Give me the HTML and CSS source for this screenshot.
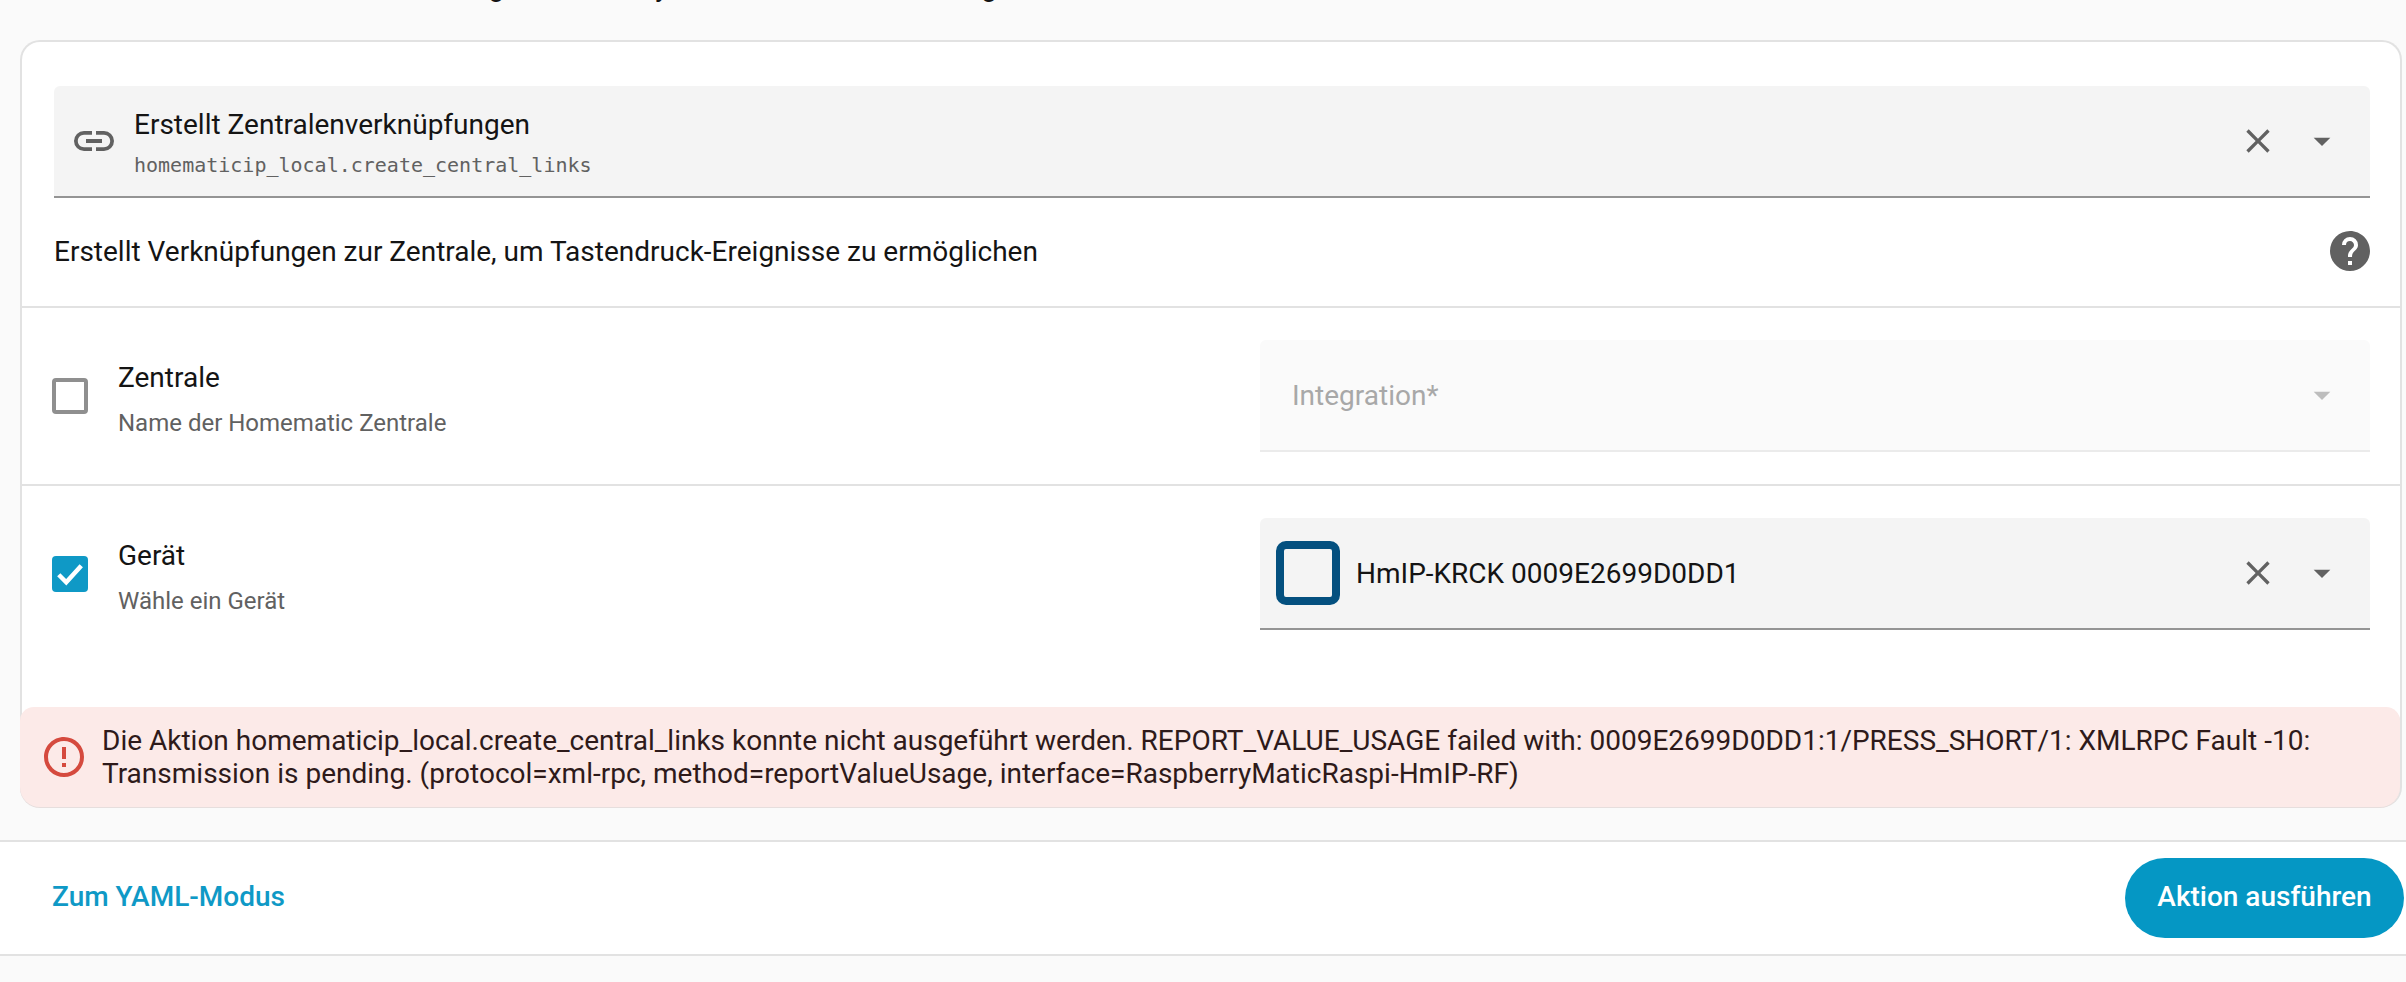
FILE: index.html
```html
<!DOCTYPE html>
<html lang="de">
<head>
  <meta charset="UTF-8" />
  <meta name="viewport" content="width=device-width, initial-scale=1.0"/>
  <title>Aktionen</title>
  <link rel="stylesheet" href="styles.css">
</head>
<body>

  <div class="intro">
    <p>Mit den Aktions-Entwicklerwerkzeug in diesem System kannst du alle verfügbaren Aktionen ausführen.</p>
  </div>

  <div class="card">
    <div class="card-body">
      <div class="field action-field">
        <svg class="icon icon-link" viewBox="0 0 24 24"><path d="M3.9,12C3.9,10.29 5.29,8.9 7,8.9H11V7H7A5,5 0 0,0 2,12A5,5 0 0,0 7,17H11V15.1H7C5.29,15.1 3.9,13.71 3.9,12M8,13H16V11H8V13M17,7H13V8.9H17C18.71,8.9 20.1,10.29 20.1,12C20.1,13.71 18.71,15.1 17,15.1H13V17H17A5,5 0 0,0 22,12A5,5 0 0,0 17,7Z"/></svg>
        <div class="action-text">
          <div class="action-name">Erstellt Zentralenverknüpfungen</div>
          <div class="action-id">homematicip_local.create_central_links</div>
        </div>
        <svg class="icon icon-close" viewBox="0 0 24 24"><path d="M19,6.41L17.59,5L12,10.59L6.41,5L5,6.41L10.59,12L5,17.59L6.41,19L12,13.41L17.59,19L19,17.59L13.41,12L19,6.41Z"/></svg>
        <svg class="icon icon-caret" viewBox="0 0 24 24"><path d="M7,10L12,15L17,10H7Z"/></svg>
      </div>

      <div class="description">
        <span>Erstellt Verknüpfungen zur Zentrale, um Tastendruck-Ereignisse zu ermöglichen</span>
        <svg class="icon icon-help" viewBox="0 0 24 24"><path d="M15.07,11.25L14.17,12.17C13.45,12.89 13,13.5 13,15H11V14.5C11,13.39 11.45,12.39 12.17,11.67L13.41,10.41C13.78,10.05 14,9.55 14,9C14,7.89 13.1,7 12,7A2,2 0 0,0 10,9H8A4,4 0 0,1 12,5A4,4 0 0,1 16,9C16,9.88 15.64,10.67 15.07,11.25M13,19H11V17H13M12,2A10,10 0 0,0 2,12C2,17.53 6.47,22 12,22C17.53,22 22,17.53 22,12C22,6.47 17.5,2 12,2Z"/></svg>
      </div>

      <div class="row">
        <div class="checkbox"></div>
        <div class="row-text">
          <div class="row-title">Zentrale</div>
          <div class="row-sub">Name der Homematic Zentrale</div>
        </div>
        <div class="field select-field disabled">
          <span class="placeholder">Integration*</span>
          <svg class="icon icon-caret" viewBox="0 0 24 24"><path d="M7,10L12,15L17,10H7Z"/></svg>
        </div>
      </div>

      <div class="row last">
        <div class="checkbox checked">
          <svg viewBox="0 0 24 24"><path d="M4.5 12.5l5 5 10-11" /></svg>
        </div>
        <div class="row-text">
          <div class="row-title">Gerät</div>
          <div class="row-sub">Wähle ein Gerät</div>
        </div>
        <div class="field select-field">
          <div class="device-logo"></div>
          <span class="device-name">HmIP-KRCK 0009E2699D0DD1</span>
          <svg class="icon icon-close" viewBox="0 0 24 24"><path d="M19,6.41L17.59,5L12,10.59L6.41,5L5,6.41L10.59,12L5,17.59L6.41,19L12,13.41L17.59,19L19,17.59L13.41,12L19,6.41Z"/></svg>
          <svg class="icon icon-caret" viewBox="0 0 24 24"><path d="M7,10L12,15L17,10H7Z"/></svg>
        </div>
      </div>
    </div>

    <div class="error">
      <svg class="icon icon-alert" viewBox="0 0 24 24"><path d="M11,15H13V17H11V15M11,7H13V13H11V7M12,2C6.47,2 2,6.5 2,12A10,10 0 0,0 12,22A10,10 0 0,0 22,12A10,10 0 0,0 12,2M12,20A8,8 0 0,1 4,12A8,8 0 0,1 12,4A8,8 0 0,1 20,12A8,8 0 0,1 12,20Z"/></svg>
      <div class="error-text">Die Aktion homematicip_local.create_central_links konnte nicht ausgeführt werden. REPORT_VALUE_USAGE failed with: 0009E2699D0DD1:1/PRESS_SHORT/1: XMLRPC Fault -10: Transmission is pending. (protocol=xml-rpc, method=reportValueUsage, interface=RaspberryMaticRaspi-HmIP-RF)</div>
    </div>
  </div>

  <div class="footer">
    <a class="yaml-link">Zum YAML-Modus</a>
    <button class="btn-run">Aktion ausführen</button>
  </div>

</body>
</html>
```

FILE: styles.css
```css
body {
  font-family: Roboto, sans-serif;
  margin: 0;
  background: #fafafa;
  color: #141414;
  font-size: 28px;
}
.intro {
  height: 40px;
  padding-left: 54px;
  overflow: hidden;
}
.intro p {
  margin: -28px 0 0;
  line-height: 30px;
  white-space: nowrap;
}
.card {
  margin: 0 4px 0 20px;
  background: #fff;
  border: 2px solid #e2e2e2;
  border-bottom: none;
  border-radius: 20px;
}
.card-body {
  padding-top: 44px;
  height: 665px;
  box-sizing: border-box;
}
.icon {
  fill: #616161;
  flex: none;
}
.field {
  display: flex;
  align-items: center;
  background: #f4f4f4;
  border-bottom: 2px solid #949494;
  border-radius: 6px 6px 0 0;
  box-sizing: border-box;
  height: 112px;
}
.action-field {
  margin: 0 30px 0 32px;
  padding-left: 16px;
}
.icon-link {
  width: 48px;
  height: 48px;
}
.action-text {
  flex: 1;
  margin-left: 16px;
  padding-top: 6px;
}
.action-name {
  line-height: 36px;
  margin-top: -2px;
}
.action-id {
  font-family: "DejaVu Sans Mono", monospace;
  font-size: 20px;
  line-height: 30px;
  margin-top: 7px;
  color: #616161;
}
.icon-close {
  width: 40px;
  height: 40px;
}
.icon-caret {
  width: 40px;
  height: 40px;
  margin: 0 28px 0 24px;
}
.description {
  display: flex;
  align-items: center;
  justify-content: space-between;
  margin: 0 26px 0 32px;
  height: 108px;
  padding-bottom: 2px;
  box-sizing: border-box;
}
.icon-help {
  width: 48px;
  height: 48px;
}
.row {
  display: flex;
  align-items: flex-start;
  border-top: 2px solid #e2e2e2;
  height: 178px;
  box-sizing: border-box;
  padding: 32px 30px 0 30px;
}
.row.last {
  height: auto;
}
.checkbox {
  width: 36px;
  height: 36px;
  margin-top: 38px;
  box-sizing: border-box;
  border: 4px solid #8f8f8f;
  border-radius: 4px;
  flex: none;
}
.checkbox.checked {
  background: #0f99c6;
  border: none;
}
.checkbox svg {
  display: block;
  width: 36px;
  height: 36px;
  fill: none;
  stroke: #fff;
  stroke-width: 3;
}
.row-text {
  width: 1142px;
  flex: none;
  margin-left: 30px;
}
.row-title {
  line-height: 36px;
  margin-top: 20px;
}
.row-sub {
  font-size: 24px;
  line-height: 30px;
  margin-top: 12px;
  color: #616161;
}
.select-field {
  flex: 1;
  min-width: 0;
  padding-left: 16px;
}
.select-field.disabled {
  background: #fafafa;
  border-bottom-color: #ebebeb;
  padding-left: 32px;
  justify-content: space-between;
}
.select-field.disabled .icon {
  fill: #bdbdbd;
}
.placeholder {
  color: #a8a8a8;
}
.device-logo {
  width: 64px;
  height: 64px;
  box-sizing: border-box;
  border: 8px solid #04507f;
  border-radius: 10px;
  flex: none;
}
.device-name {
  flex: 1;
  margin-left: 16px;
}
.error {
  display: flex;
  align-items: center;
  height: 100px;
  margin: 0 0 0 -2px;
  background: #fceae8;
  border-radius: 14px 14px 20px 20px;
  box-shadow: 0 1px 0 #e6dedd;
  padding-left: 20px;
  box-sizing: border-box;
}
.icon-alert {
  width: 48px;
  height: 48px;
  fill: #d54a3e;
}
.error-text {
  margin-left: 14px;
  margin-right: 60px;
  line-height: 33px;
  color: #2e1a1a;
}
.footer {
  display: flex;
  align-items: center;
  justify-content: space-between;
  margin-top: 33px;
  height: 116px;
  box-sizing: border-box;
  background: #fff;
  border-top: 2px solid #e2e2e2;
  border-bottom: 2px solid #e2e2e2;
  padding: 0 2px 0 52px;
}
.yaml-link {
  color: #0f99c6;
  font-weight: 500;
  margin-bottom: 4px;
}
.btn-run {
  background-color: #0597c4;
  color: #fff;
  border: none;
  font-family: inherit;
  font-size: inherit;
  font-weight: 500;
  height: 80px;
  width: 279px;
  border-radius: 40px;
  padding: 0 0 3px;
}
```
